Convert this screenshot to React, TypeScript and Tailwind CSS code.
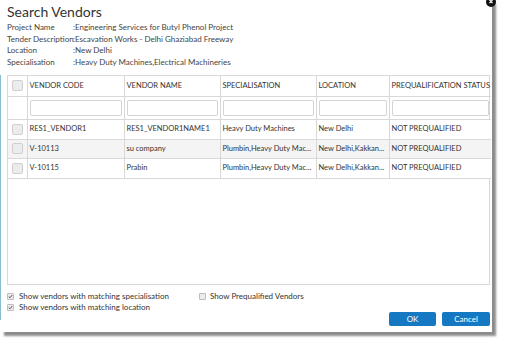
import React from 'react';

const info = [
  { label: 'Project Name', value: 'Engineering Services for Butyl Phenol Project' },
  { label: 'Tender Description', value: 'Escavation Works - Delhi Ghaziabad Freeway' },
  { label: 'Location', value: 'New Delhi' },
  { label: 'Specialisation', value: 'Heavy Duty Machines,Electrical Machineries' },
];

const columns = ['VENDOR CODE', 'VENDOR NAME', 'SPECIALISATION', 'LOCATION', 'PREQUALIFICATION STATUS'];

const rows = [
  { code: 'RES1_VENDOR1', name: 'RES1_VENDOR1NAME1', spec: 'Heavy Duty Machines', loc: 'New Delhi', status: 'NOT PREQUALIFIED', h: 'h-[20px]', bg: 'bg-white' },
  { code: 'V-10113', name: 'su company', spec: 'Plumbin,Heavy Duty Mac...', loc: 'New Delhi,Kakkan...', status: 'NOT PREQUALIFIED', h: 'h-[19px]', bg: 'bg-[#f4f4f4]' },
  { code: 'V-10115', name: 'Prabin', spec: 'Plumbin,Heavy Duty Mac...', loc: 'New Delhi,Kakkan...', status: 'NOT PREQUALIFIED', h: 'h-[20px]', bg: 'bg-white' },
];

const Box = () => (
  <div className="mx-auto w-[11px] h-[11px] rounded-[2px] border border-[#cfcfcf] bg-[#ececec]" />
);

const SmallCheck = ({ checked }: { checked: boolean }) => (
  <span className="inline-flex items-center justify-center w-[7px] h-[7px] rounded-[1px] border border-[#bdbdbd] bg-[#ececec]">
    {checked && (
      <svg viewBox="0 0 8 8" className="w-[7px] h-[7px]">
        <path d="M1.2 4.2 L3.2 6 L6.8 1.6" fill="none" stroke="#333" strokeWidth="1.3" />
      </svg>
    )}
  </span>
);

export default function App() {
  return (
    <div className="relative w-[505px] h-[343px] bg-white overflow-hidden" style={{ fontFamily: 'Lato, "Open Sans", sans-serif' }}>
      <div className="w-[492px] h-[332px] bg-white pl-[7px] pt-[3px] shadow-[4px_4px_2px_rgba(0,0,0,0.45)] text-[#333]">
        <h1 className="text-[14px] leading-[17px] text-[#333]">Search Vendors</h1>

        <div className="mt-[2px] text-[8px] leading-[11.5px] text-[#444]">
          {info.map((r) => (
            <div key={r.label} className="flex whitespace-nowrap">
              <span className="w-[66px] shrink-0">{r.label}</span>
              <span>:{r.value}</span>
            </div>
          ))}
        </div>

        <div className="mt-[7px] w-[483px] h-[210px] border border-[#d8d8d8]">
          <table className="w-full table-fixed border-collapse text-[7.5px] text-[#333]">
            <colgroup>
              <col className="w-[19px]" />
              <col className="w-[97px]" />
              <col className="w-[96px]" />
              <col className="w-[96px]" />
              <col className="w-[73px]" />
              <col className="w-[102px]" />
            </colgroup>
            <thead>
              <tr className="h-[20px]">
                <th className="border-r border-b border-[#d8d8d8] p-0"><Box /></th>
                {columns.map((c, i) => (
                  <th key={c} className={`border-b border-[#d8d8d8] px-[2px] text-left font-normal whitespace-nowrap overflow-hidden ${i < columns.length - 1 ? 'border-r' : ''}`}>{c}</th>
                ))}
              </tr>
              <tr className="h-[23px]">
                <th className="border-r border-b border-[#d8d8d8] p-0" />
                {columns.map((c, i) => (
                  <th key={c} className={`border-b border-[#d8d8d8] px-[2px] ${i < columns.length - 1 ? 'border-r' : ''}`}>
                    <div className="h-[16px] rounded-[2px] border border-[#d4d4d4] bg-white" />
                  </th>
                ))}
              </tr>
            </thead>
            <tbody>
              {rows.map((r) => (
                <tr key={r.code} className={`${r.h} ${r.bg}`}>
                  <td className="border-r border-b border-[#d8d8d8] p-0"><Box /></td>
                  {[r.code, r.name, r.spec, r.loc, r.status].map((v, i) => (
                    <td key={i} className={`border-b border-[#d8d8d8] px-[2px] whitespace-nowrap overflow-hidden ${i < 4 ? 'border-r' : ''}`}>{v}</td>
                  ))}
                </tr>
              ))}
            </tbody>
          </table>
        </div>

        <div className="mt-[6px] flex text-[8px] leading-[11px] text-[#333]">
          <div className="w-[192px]">
            <label className="flex items-center gap-[5px]"><SmallCheck checked />Show vendors with matching specialisation</label>
            <label className="flex items-center gap-[5px]"><SmallCheck checked />Show vendors with matching location</label>
          </div>
          <label className="flex items-center gap-[4px] h-[11px]"><SmallCheck checked={false} />Show Prequalified Vendors</label>
        </div>

        <div className="mt-[-1px] flex justify-end gap-[6px] pr-[2px]">
          <button className="w-[47px] h-[14px] rounded-[2px] bg-[#1479c2] text-white text-[8px] leading-[14px]">OK</button>
          <button className="w-[48px] h-[14px] rounded-[2px] bg-[#1479c2] text-white text-[8px] leading-[14px]">Cancel</button>
        </div>
      </div>

      <div className="absolute left-0 top-[75px] w-[1px] h-[245px] bg-[#86bfd2]" />
      <svg className="absolute left-[485px] top-[-4px]" width="12" height="12" viewBox="0 0 12 12">
        <circle cx="6" cy="6" r="5" fill="#111" />
        <path d="M4.5 4 L7.5 7 M7.5 4 L4.5 7" stroke="#fff" strokeWidth="1.2" />
      </svg>
    </div>
  );
}
